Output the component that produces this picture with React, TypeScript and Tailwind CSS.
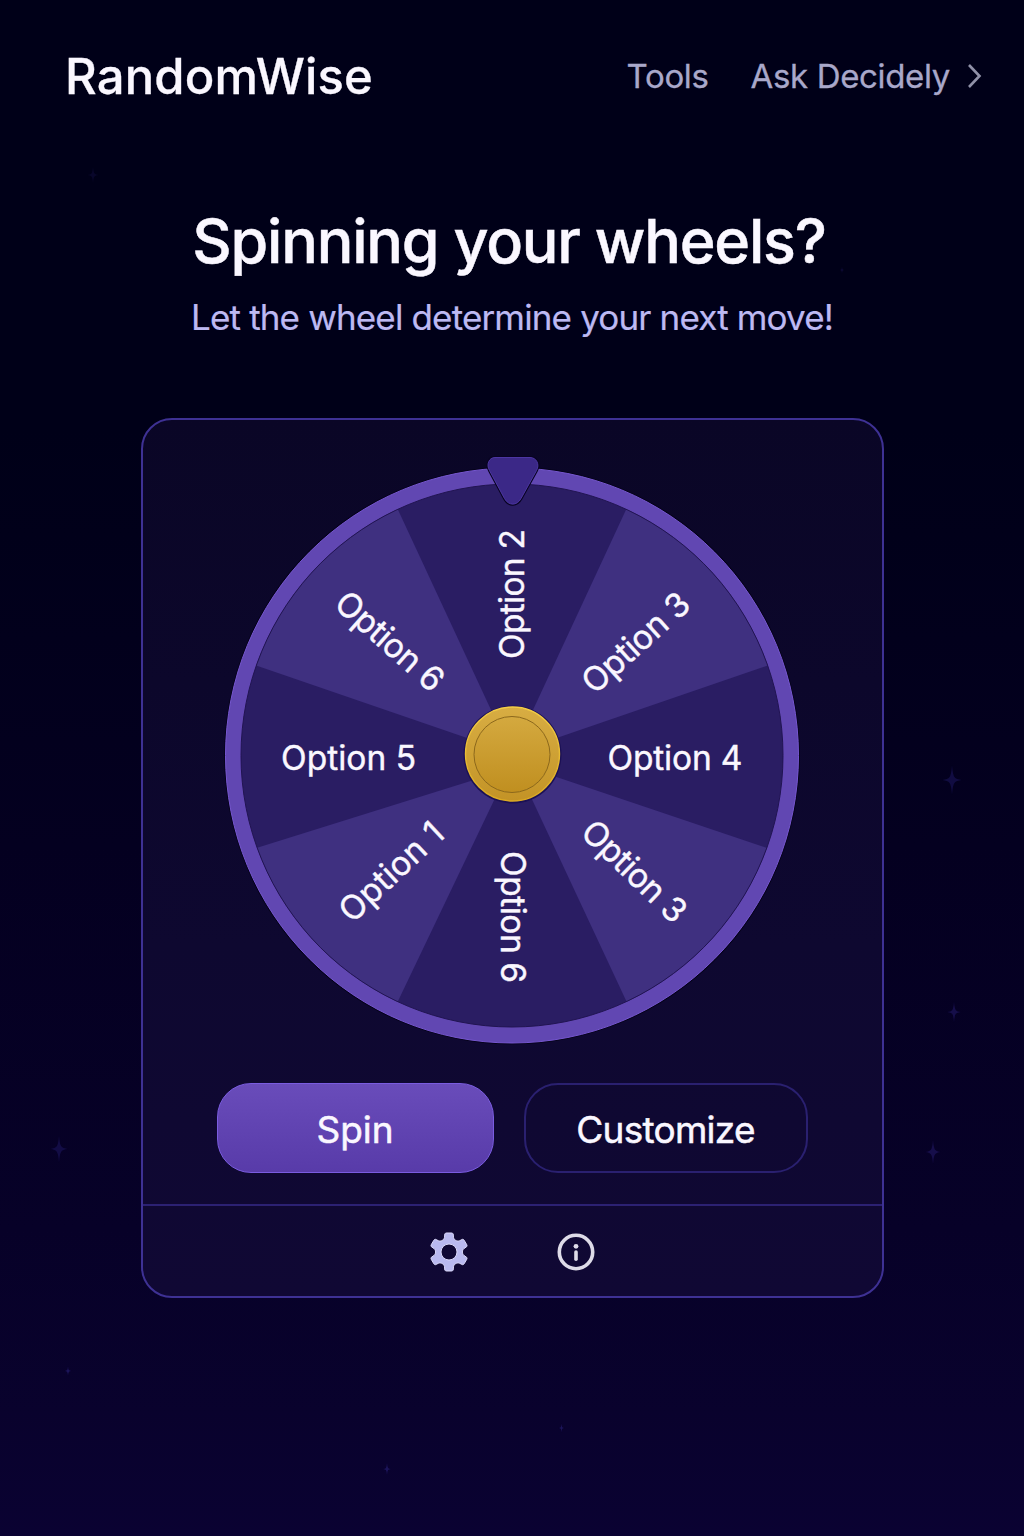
import React from "react";

type Label = { text: string; x: number; y: number; angle: number; length: number };

const labels: Label[] = [
  { text: "Option 2", x: 0, y: -161, angle: -90, length: 130 },
  { text: "Option 3", x: 123.5, y: -112.5, angle: -42, length: 132 },
  { text: "Option 4", x: 163, y: 2.5, angle: 0, length: 135 },
  { text: "Option 3", x: 122.5, y: 116, angle: 44, length: 131 },
  { text: "Option 6", x: 0.5, y: 162, angle: 90, length: 132 },
  { text: "Option 1", x: -121, y: 116.5, angle: -43, length: 129 },
  { text: "Option 5", x: -163.5, y: 2.5, angle: 0, length: 135 },
  { text: "Option 6", x: -122, y: -114, angle: 41.5, length: 132 },
];

const stars = [
  { x: 93, y: 175, s: 7, o: 0.25 },
  { x: 842, y: 270, s: 3, o: 0.4 },
  { x: 952, y: 780, s: 12, o: 0.55 },
  { x: 954, y: 1012, s: 8.5, o: 0.65 },
  { x: 933, y: 1152, s: 10, o: 0.65 },
  { x: 59, y: 1149, s: 11, o: 0.55 },
  { x: 68, y: 1371, s: 4, o: 0.9 },
  { x: 561.5, y: 1428, s: 3.5, o: 0.9 },
  { x: 387, y: 1469, s: 5, o: 0.9 },
];

function Sky() {
  return (
    <svg className="pointer-events-none absolute inset-0" width="1024" height="1536" viewBox="0 0 1024 1536" aria-hidden="true">
      {stars.map((st, i) => (
        <path
          key={i}
          transform={`translate(${st.x} ${st.y}) scale(${st.s / 10})`}
          d="M0-12Q.6-4 2.2-2.2Q3.5-.5 8 0Q3.5.5 2.2 2.2Q.6 4 0 12Q-.6 4-2.2 2.2Q-3.5.5-8 0Q-3.5-.5-2.2-2.2Q-.6-4 0-12Z"
          fill="#1e165e"
          opacity={st.o}
        />
      ))}
    </svg>
  );
}

function Wheel() {
  return (
    <svg className="block" width="578" height="596" viewBox="-289 -303 578 596">
      <defs>
        <linearGradient id="gold" x1="0" y1="0" x2="0" y2="1">
          <stop offset="0" stopColor="#d8ad43" />
          <stop offset="0.5" stopColor="#cea135" />
          <stop offset="1" stopColor="#c39326" />
        </linearGradient>
        <linearGradient id="goldInner" x1="0" y1="0" x2="0" y2="1">
          <stop offset="0" stopColor="#d4a93f" />
          <stop offset="1" stopColor="#c08f20" />
        </linearGradient>
        <linearGradient id="rim" x1="0" y1="0" x2="0" y2="1">
          <stop offset="0" stopColor="#f4cd45" />
          <stop offset="1" stopColor="#dba922" />
        </linearGradient>
        <clipPath id="disc">
          <ellipse cy="0.5" rx="271" ry="271.5" />
        </clipPath>
      </defs>
      <ellipse cy="0.5" rx="287.8" ry="288.8" fill="#05021a" />
      <ellipse cy="0.5" rx="286.5" ry="287.5" fill="#6147b2" stroke="#7657d0" strokeWidth="1" />
      <ellipse cy="0.5" rx="271" ry="271.5" fill="#2a1d63" />
      <g clipPath="url(#disc)" fill="#3f3080">
        <path d="M1-2 128.3-276 320-111.5Z" />
        <path d="M3 8 320 115 128.3 276Z" />
        <path d="M-3 14-128.3 276-320 113Z" />
        <path d="M-1-2-320-111.5-128.3-276Z" />
      </g>
      <ellipse cy="0.5" rx="271" ry="271.5" fill="none" stroke="#211452" strokeWidth="1" />
      {labels.map((l, i) => (
        <text
          key={i}
          transform={`translate(${l.x} ${l.y}) rotate(${l.angle})`}
          y="12"
          textAnchor="middle"
          textLength={l.length}
          fill="#faf7ff"
          stroke="#faf7ff"
          strokeWidth="0.4"
          className="font-[Inter,sans-serif] text-[33.5px]"
        >
          {l.text}
        </text>
      ))}
      <circle cx="0.5" cy="-0.5" r="49" fill="#1b1055" />
      <circle cx="0.5" cy="-1" r="47" fill="url(#gold)" stroke="url(#rim)" strokeWidth="1.4" />
      <circle cx="0" cy="-0.5" r="38" fill="url(#goldInner)" stroke="#8c681c" strokeWidth="1" />
      <path
        d="M-17-297.5H18C24.5-297.5 28-290.5 24.5-284.5L9-256.5C5-249-3.5-249-7.5-256.5L-22.5-284.5C-26-290.5-23-297.5-17-297.5Z"
        fill="#3b2887"
        stroke="#080322"
        strokeWidth="3"
      />
      <path
        d="M-17-297.5H18C24.5-297.5 28-290.5 24.5-284.5L9-256.5C5-249-3.5-249-7.5-256.5L-22.5-284.5C-26-290.5-23-297.5-17-297.5Z"
        fill="#3b2887"
        stroke="#4c36a2"
        strokeWidth="1"
      />
    </svg>
  );
}

function toothPoint(radius: number, degrees: number) {
  const a = (degrees * Math.PI) / 180;
  return `${(radius * Math.sin(a)).toFixed(2)} ${(-radius * Math.cos(a)).toFixed(2)}`;
}

const gearOutline =
  [0, 60, 120, 180, 240, 300]
    .map(
      (t) =>
        `${t === 0 ? "M" : "L"}${toothPoint(18.6, t - 13)}Q${toothPoint(19.3, t - 11)} ${toothPoint(19.2, t - 8)}` +
        `L${toothPoint(19.2, t + 8)}Q${toothPoint(19.3, t + 11)} ${toothPoint(18.6, t + 13)}` +
        `L${toothPoint(15.4, t + 17)}C${toothPoint(13, t + 22)} ${toothPoint(13, t + 38)} ${toothPoint(15.4, t + 43)}`,
    )
    .join("") + "ZM0-8A8 8 0 1 0 0 8A8 8 0 1 0 0-8Z";

function GearIcon() {
  return (
    <svg width="38" height="40" viewBox="-19 -20 38 40" aria-hidden="true">
      <path fillRule="evenodd" d={gearOutline} fill="#b9b9ef" stroke="#dcdafa" strokeWidth="1" strokeLinejoin="round" />
    </svg>
  );
}

function InfoIcon() {
  return (
    <svg width="38" height="38" viewBox="-19 -19 38 38" fill="none" aria-hidden="true">
      <circle r="16.7" stroke="#dedbe8" strokeWidth="3.6" />
      <circle cy="-5.7" r="2.4" fill="#dedbe8" />
      <path d="M0 0V7.3" stroke="#dedbe8" strokeWidth="3.6" strokeLinecap="round" />
    </svg>
  );
}

export default function App() {
  return (
    <div className="relative h-[1536px] w-[1024px] overflow-hidden bg-[linear-gradient(180deg,#000018_0%,#000018_28%,#040020_55%,#070128_80%,#09022d_92%,#0a0232_100%)] font-[Inter,sans-serif]">
      <Sky />
      <div className="relative flex flex-col items-center">
        <header className="flex h-[152px] w-full items-center justify-between pl-[65px] pr-[42px]">
          <div className="text-[49px] font-medium leading-none tracking-[0.15px] text-[#faf7ff] [-webkit-text-stroke:0.3px_#faf7ff]">RandomWise</div>
          <nav className="flex items-center text-[33px] leading-none tracking-[-0.35px] text-[#a9a8ca] [-webkit-text-stroke:0.3px_#a9a8ca]">
            <a className="mr-[42px]">Tools</a>
            <a>Ask Decidely</a>
            <svg className="ml-[17px]" width="15" height="26" viewBox="0 0 15 26" fill="none" aria-hidden="true">
              <path d="M2 2 12.5 13 2 24" stroke="#9091a8" strokeWidth="2.6" />
            </svg>
          </nav>
        </header>

        <h1 className="mt-[57px] mr-[6px] whitespace-nowrap text-[61px] font-medium leading-[64px] tracking-[-1.2px] text-[#faf7ff] [-webkit-text-stroke:0.5px_#faf7ff]">
          Spinning your wheels?
        </h1>
        <p className="mt-[24px] whitespace-nowrap text-[35px] leading-[40px] tracking-[-0.85px] text-[#bdb9f2] [-webkit-text-stroke:0.2px_#bdb9f2]">
          Let the wheel determine your next move!
        </p>

        <main className="mt-[81px] flex h-[880px] w-[743px] flex-col items-center rounded-[31px] border-2 border-[#3e3194] bg-[linear-gradient(180deg,#0a0626_0%,#0e0830_60%,#100834_100%)]">
          <div className="mt-[32px]">
            <Wheel />
          </div>
          <div className="mt-[35px] flex gap-[30px]">
            <button className="h-[90px] w-[277px] rounded-[34px] border border-[#7a5ce0] bg-[linear-gradient(180deg,#694cba,#583ba9)] pt-[3px] text-[37px] text-[#faf7ff] [-webkit-text-stroke:0.5px_#faf7ff]">
              Spin
            </button>
            <button className="h-[90px] w-[284px] rounded-[34px] border-2 border-[#2a2070] pt-[3px] text-[37px] tracking-[-0.75px] text-[#faf7ff] [-webkit-text-stroke:0.5px_#faf7ff]">
              Customize
            </button>
          </div>
          <footer className="mt-[31px] flex w-full flex-1 items-center justify-center gap-[89px] border-t-2 border-[#2c2173] pt-[2px]">
            <GearIcon />
            <InfoIcon />
          </footer>
        </main>
      </div>
    </div>
  );
}
